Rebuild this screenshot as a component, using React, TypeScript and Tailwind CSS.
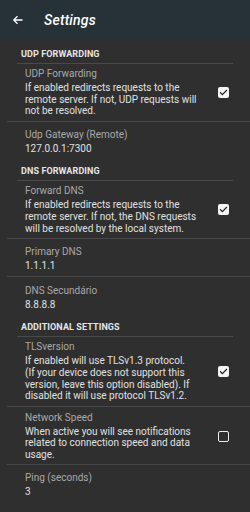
import React from "react";

type Item = {
  title: string;
  summary: string;
  checked?: boolean;
  pad: string;
};

type Section = {
  header: string;
  pad: string;
  items: Item[];
};

const sections: Section[] = [
  {
    header: "UDP FORWARDING",
    pad: "pt-[8px]",
    items: [
      {
        title: "UDP Forwarding",
        summary:
          "If enabled redirects requests to the remote server. If not, UDP requests will not be resolved.",
        checked: true,
        pad: "pt-[4.5px] pb-[4px]",
      },
      {
        title: "Udp Gateway (Remote)",
        summary: "127.0.0.1:7300",
        pad: "pt-[7px] pb-[4px]",
      },
    ],
  },
  {
    header: "DNS FORWARDING",
    pad: "pt-[7px]",
    items: [
      {
        title: "Forward DNS",
        summary:
          "If enabled redirects requests to the remote server. If not, the DNS requests will be resolved by the local system.",
        checked: true,
        pad: "pt-[4.5px] pb-[4px]",
      },
      { title: "Primary DNS", summary: "1.1.1.1", pad: "pt-[7px] pb-[4px]" },
      {
        title: "DNS Secundário",
        summary: "8.8.8.8",
        pad: "pt-[8px] pb-[4px]",
      },
    ],
  },
  {
    header: "ADDITIONAL SETTINGS",
    pad: "pt-[7px]",
    items: [
      {
        title: "TLSversion",
        summary:
          "If enabled will use TLSv1.3 protocol.\n(If your device does not support this version, leave this option disabled). If disabled it will use protocol TLSv1.2.",
        checked: true,
        pad: "pt-[4.5px] pb-[4px]",
      },
      {
        title: "Network Speed",
        summary:
          "When active you will see notifications related to connection speed and data usage.",
        checked: false,
        pad: "pt-[5px] pb-[3px]",
      },
      { title: "Ping (seconds)", summary: "3", pad: "pt-[7px] pb-[4px]" },
    ],
  },
];

const CheckBox = ({ checked }: { checked: boolean }) =>
  checked ? (
    <div className="w-[11px] h-[11px] rounded-[2px] bg-[#f5f5f5] flex items-center justify-center">
      <svg width="9" height="9" viewBox="0 0 24 24" fill="none">
        <path
          d="M4 12.5l5 5L20 6.5"
          stroke="#222"
          strokeWidth="3.2"
          strokeLinecap="square"
        />
      </svg>
    </div>
  ) : (
    <div className="w-[11px] h-[11px] rounded-[2px] border-[1.5px] border-[#eeeeee]" />
  );

const Row = ({ item, first }: { item: Item; first: boolean }) => (
  <div className={first ? "" : "ml-[7px] border-t border-[#474747]"}>
    <div
      className={
        (first ? "pl-[25px] " : "pl-[18px] ") +
        item.pad +
        " flex items-center pr-[21px]"
      }
    >
      <div className="flex-1 pr-[20px]">
        <div className="text-[10px] leading-[12px] text-[#a9a9a9]">
          {item.title}
        </div>
        <div className="whitespace-pre-line text-[10px] leading-[11.6px] text-[#e0e0e0] mt-[2px]">
          {item.summary}
        </div>
      </div>
      {item.checked !== undefined && <CheckBox checked={item.checked} />}
    </div>
  </div>
);

const App = () => (
  <main
    className="w-[250px] h-[512px] overflow-hidden bg-[#2f2f2f]"
    style={{ fontFamily: "Roboto, 'Noto Sans', sans-serif" }}
  >
    <header className="h-[40px] bg-[#263238] flex items-center">
      <svg
        className="ml-[12px]"
        width="12"
        height="12"
        viewBox="0 0 24 24"
        fill="none"
      >
        <path
          d="M21 12H4M11 4.5L3.5 12l7.5 7.5"
          stroke="#ffffff"
          strokeWidth="2.6"
        />
      </svg>
      <h1 className="ml-[20px] text-[14px] font-medium italic text-white tracking-[0.2px]">
        Settings
      </h1>
    </header>
    {sections.map((s) => (
      <section key={s.header}>
        <div
          className={
            "mx-[17px] pb-[2.5px] border-b border-[#4a4a4a] " + s.pad
          }
        >
          <div className="pl-[4px] text-[9px] leading-[12px] font-bold text-[#e6e6e6] tracking-[0.1px]">
            {s.header}
          </div>
        </div>
        {s.items.map((it, i) => (
          <Row key={it.title} item={it} first={i === 0} />
        ))}
      </section>
    ))}
  </main>
);

export default App;
